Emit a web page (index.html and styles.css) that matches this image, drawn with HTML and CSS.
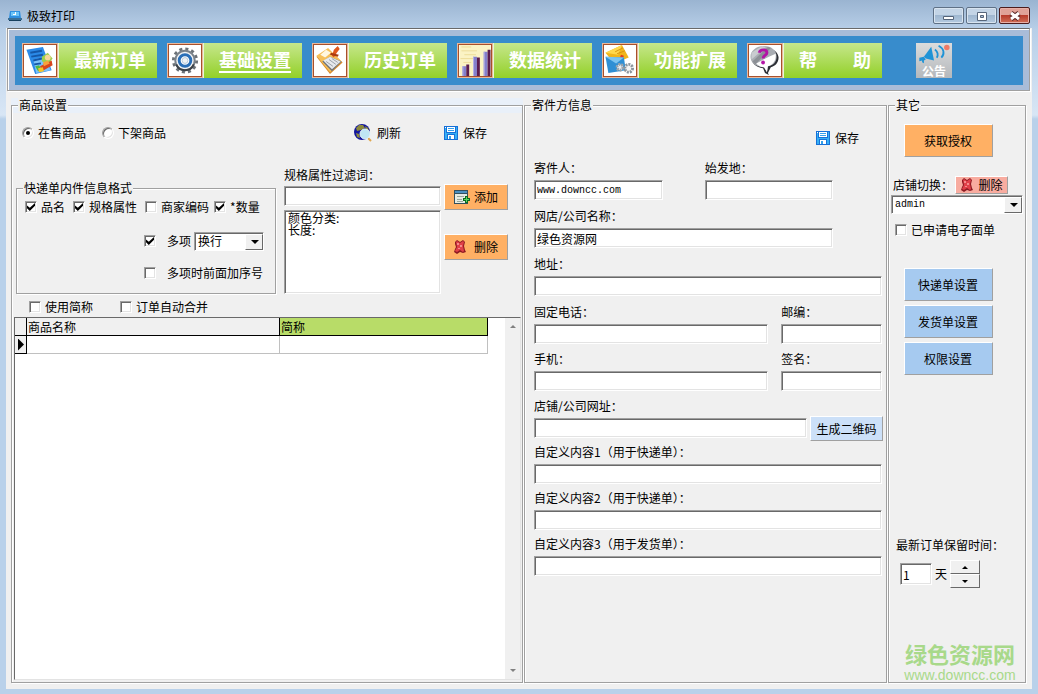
FILE: index.html
```html
<!DOCTYPE html>
<html lang="zh-CN">
<head>
    <meta charset="UTF-8">
    <meta name="viewport" content="width=device-width, initial-scale=1.0">
    <title>极致打印</title>
    <link rel="stylesheet" href="styles.css">
</head>
<body>
    <!-- shared icons -->
    <svg class="sprite" aria-hidden="true">
        <symbol id="icon-save" viewBox="0 0 14 14">
            <path fill="#1670d8" d="M0 0h14v14H0z"/>
            <path fill="#35b0f4" d="M1 1h12v12H1z"/>
            <path fill="#1670d8" d="M2 0h10v7H2zM3 8h8v6H3z"/>
            <path fill="#fff" d="M3 1h8v5H3zM4 9h6v4H4zM1 1h1v1H1z"/>
            <path fill="#35a0ec" d="M4 2h6v1H4zM4 4h6v1H4zM5 10h2v3H5z"/>
        </symbol>
        <symbol id="icon-delete" viewBox="0 0 12 14">
            <path fill="#8e1a22" d="M1 2 3 0l3 2 3-2 2 2-1 4 1 4 1 2-3 1-3-1-3 2-3-2 1-3 1-2-1-3z"/>
            <path fill="#e04048" d="m2 2 1-1 3 2 3-2 1 1-1 4 1 5-1 1-3-2-3 2-2-1 2-4z"/>
            <path fill="#f58a8a" d="M3 3h2v2H3zM6 5h2v2H6zM4 8h2v1H4z"/>
        </symbol>
    </svg>

    <div class="window">
        <header class="titlebar">
            <svg class="app-icon" viewBox="0 0 16 12">
                <path fill="#2f8fe0" d="M3 1h10l1 7H2z"/>
                <path fill="#6cc4f8" d="M4 2h8v4H4z"/>
                <path fill="#fff" d="M8 2h1v3H6V4h2z"/>
                <path fill="#3a6f96" d="M1 8h14v2H1z"/>
                <path fill="#16405f" d="M2 10h12v1H2z"/>
            </svg>
            <h1>极致打印</h1>
            <div class="window-buttons">
                <button type="button" aria-label="最小化"><svg viewBox="0 0 14 12"><path fill="#fff" stroke="#56657a" d="M1.500 6.500h10v3h-10z"/></svg></button>
                <button type="button" aria-label="最大化"><svg viewBox="0 0 14 12"><path fill="#fff" stroke="#56657a" d="M2.500 2.500h9v8h-9z"/><path fill="#a7bdd6" stroke="#56657a" d="M5.500 5.500h3v2h-3z"/></svg></button>
                <button type="button" class="close" aria-label="关闭"><svg viewBox="0 0 14 12"><path stroke="#5a2a2a" stroke-width="5" d="m3 3 8 6M11 3 3 9"/><path stroke="#fff" stroke-width="3" d="m3 3 8 6M11 3 3 9"/></svg></button>
            </div>
        </header>

        <div class="client">
            <nav class="toolbar">
                <div class="toolbar-inner">
                    <button type="button" class="nav-btn">
                        <span class="nav-icon">
                            <svg viewBox="0 0 32 32">
                                <path fill="#2b8ae8" d="m2 5 17-3 9 24-17 4z"/>
                                <path fill="#7cc2fa" d="m9 15 12-3 6 14-15 3z"/>
                                <path stroke="#1457a8" stroke-width="2" d="m6 8 12-2M7 12l12-2M9 16l9-2M10 20l7-1"/>
                                <path fill="#9ccf4c" d="m18 12 6-4 5 6-4 5-7-2z"/>
                                <circle cx="24" cy="13" r="3" fill="#f7d79a"/>
                                <path fill="#d8451c" d="m16 22 12-6 1 5-11 6z"/>
                                <path fill="#f8a03c" d="m19 18 5-2 2 3-6 3z"/>
                                <path fill="#50b848" d="m11 22 4-1 3 5-4 1z"/>
                                <path fill="#f5c428" d="m14 24 5-1 1 4-5 1z"/>
                            </svg>
                        </span>
                        <span class="nav-label"><span>最新订单</span></span>
                    </button>
                    <button type="button" class="nav-btn active">
                        <span class="nav-icon">
                            <svg viewBox="0 0 32 32">
                                <circle cx="16" cy="16" r="12" stroke="#6c7278" stroke-width="3" stroke-dasharray="3.140 3.140"/>
                                <circle cx="16" cy="16" r="10" fill="#f0f2f4" stroke="#7a828a" stroke-width="2"/>
                                <path stroke="#3c4248" stroke-width="2" d="M7 20c3 8 15 8 18 0"/>
                                <circle cx="16" cy="16" r="6" fill="#fff" stroke="#2a6fb8" stroke-width="3"/>
                                <circle cx="16" cy="16" r="3" fill="#eef2f5" stroke="#b8c8d8"/>
                            </svg>
                        </span>
                        <span class="nav-label"><span>基础设置</span></span>
                    </button>
                    <button type="button" class="nav-btn">
                        <span class="nav-icon">
                            <svg viewBox="0 0 32 32">
                                <path fill="#d98c2c" d="m2 12 12-8 15 14-13 12z"/>
                                <path fill="#f6bf58" d="m2 11 12-8 14 14-12 11z"/>
                                <path fill="#fff7e0" d="m6 10 6-5 5 3-6 5z"/>
                                <path fill="#70747a" d="m8 17 8-5 12 5-10 10z"/>
                                <path fill="#e6e9ed" d="m9 16 7-4 11 5-9 8z"/>
                                <path stroke="#9aa0a8" d="m12 17 7 5M15 15l7 5M18 14l6 4"/>
                                <path fill="#e0581c" d="m18 11 2-6 4-4 2 3-3 4-3 5z"/>
                                <path fill="#a83a10" d="m17 8 8 2-1 2-8-2z"/>
                            </svg>
                        </span>
                        <span class="nav-label"><span>历史订单</span></span>
                    </button>
                    <button type="button" class="nav-btn">
                        <span class="nav-icon">
                            <svg viewBox="0 0 32 32">
                                <path fill="#fbf3c4" d="M0 0h32v32H0z"/>
                                <path stroke="#ecdc98" d="M2 6h16M5 10h12M1 14h14M4 18h8M2 2h10"/>
                                <path fill="#8480cc" d="M3 22h4v10H3zM14 12h4v20h-4zM25 7h4v25h-4z"/>
                                <path fill="#5c1c4e" d="M7 20h3v12H7zM18 13h3v19h-3zM29 5h3v27h-3z"/>
                                <path fill="#b7b2e4" d="M3 22h1v10H3zM14 12h1v20h-1zM25 7h1v25h-1z"/>
                            </svg>
                        </span>
                        <span class="nav-label"><span>数据统计</span></span>
                    </button>
                    <button type="button" class="nav-btn">
                        <span class="nav-icon">
                            <svg viewBox="0 0 32 32">
                                <path fill="#f1b51c" d="m1 8 17-8 7 13-15 6z"/>
                                <path fill="#ffd84c" d="m1 8 17-8-4 10z"/>
                                <path stroke="#d89410" d="m11 7 8-4M13 9l8-3"/>
                                <path fill="#e03c20" d="m17 10 3 1-1 3-3-1z"/>
                                <path fill="#2f8fd4" d="m1 12 19 1 2 13-18 3z"/>
                                <path fill="#7cc4f0" d="m1 12 11 7 8-6z"/>
                                <circle cx="16" cy="23" r="3" fill="#e9edf0" stroke="#9ba4ac" stroke-width="3" stroke-dasharray="2 1"/>
                                <circle cx="25" cy="24" r="4" fill="#f4f4f4" stroke="#8c959d" stroke-width="3" stroke-dasharray="2 1"/>
                            </svg>
                        </span>
                        <span class="nav-label"><span>功能扩展</span></span>
                    </button>
                    <button type="button" class="nav-btn">
                        <span class="nav-icon">
                            <svg viewBox="0 0 32 32">
                                <path fill="#2c2f35" d="M16 3c9 0 14 5 14 10 0 6-4 9-8 10l-3 6 1 2-4-2-2-5C7 23 2 19 2 13 2 7 8 3 16 3z"/>
                                <path fill="#a9adb3" d="M15 1c8 0 13 5 13 11S24 21 19 22l-1 6-3-5C6 22 1 18 1 12S7 1 15 1z"/>
                                <path fill="#c9ccd0" d="m2 8 11-7 4 1L2 15z"/>
                                <path fill="#8c9096" d="m3 17 16-15 3 1L6 20z"/>
                                <path fill="#fff" d="M27 9c1 7-3 12-8 13l-1 6-3-5c-3 0-6-2-8-4l13-7z"/>
                                <path stroke="#b314a6" stroke-width="3" d="M10 8c1-4 8-4 8 0 0 3-4 2-4 6"/>
                                <circle cx="14" cy="18" r="2" fill="#b314a6"/>
                            </svg>
                        </span>
                        <span class="nav-label"><span>帮　　助</span></span>
                    </button>
                    <button type="button" class="notice-btn">
                        <svg viewBox="0 0 36 24">
                            <path fill="#1f93d6" d="m7 15 8-11 3 15-9-2z"/>
                            <path fill="#1f93d6" d="m2 16 5-1 2 3-2 1v3l-2-1v-2l-3 1z"/>
                            <path stroke="#1f93d6" stroke-width="2" d="M19 7c3 2 4 6 2 9M23 3c6 3 7 9 3 13"/>
                            <circle cx="32" cy="5" r="3" fill="#ee7a66"/>
                        </svg>
                        <span>公告</span>
                    </button>
                </div>
            </nav>

            <main class="panels">
                <div class="goods-wrap">
                    <fieldset class="group goods">
                        <legend>商品设置</legend>
                        <div class="goods-body">
                            <div class="goods-top">
                                <label class="choice"><input type="radio" name="goods" checked>在售商品</label>
                                <label class="choice"><input type="radio" name="goods">下架商品</label>
                                <button type="button" class="flat-btn refresh">
                                    <svg viewBox="0 0 18 18">
                                        <circle cx="8" cy="8" r="8" fill="#14189c"/>
                                        <path fill="#8c8a3c" d="M5 1h4l2 3-4 2-4 1-1-3zM11 2l3 2 1 3-3-1zM2 9l3 1 1 4-3-1z"/>
                                        <path stroke="#e0a850" stroke-width="2" d="m14 14 3 3"/>
                                        <circle cx="11" cy="10" r="5" fill="#bfe6f4" stroke="#e4f4fa"/>
                                    </svg>刷新
                                </button>
                                <button type="button" class="flat-btn"><svg class="icon-save"><use href="#icon-save"/></svg>保存</button>
                            </div>

                            <div class="goods-mid">
                                <fieldset class="group format">
                                    <legend>快递单内件信息格式</legend>
                                    <div class="format-row">
                                        <label class="choice"><input type="checkbox" checked>品名</label>
                                        <label class="choice"><input type="checkbox" checked>规格属性</label>
                                        <label class="choice"><input type="checkbox">商家编码</label>
                                        <label class="choice"><input type="checkbox" checked>*数量</label>
                                    </div>
                                    <div class="format-row indent">
                                        <label class="choice wide"><input type="checkbox" checked>多项</label>
                                        <span class="combo small">
                                            <select aria-label="多项分隔"><option>换行</option></select>
                                        </span>
                                    </div>
                                    <div class="format-row indent">
                                        <label class="choice wide"><input type="checkbox">多项时前面加序号</label>
                                    </div>
                                </fieldset>
                                <div class="filter">
                                    <label for="filterWord">规格属性过滤词：</label>
                                    <input type="text" class="box" id="filterWord">
                                    <textarea class="box" aria-label="过滤词列表">颜色分类:
长度:</textarea>
                                </div>
                                <div class="filter-buttons">
                                    <button type="button" class="btn orange">
                                        <svg viewBox="0 0 16 14">
                                            <path fill="#33505f" d="M0 0h14v14H0z"/>
                                            <path fill="#e6ece4" d="M1 4h12v9H1z"/>
                                            <path fill="#4c90c0" d="M1 1h12v2H1z"/>
                                            <path fill="#9aa79a" d="M3 6h7v1H3zM3 9h5v1H3zM3 11h6v1H3z"/>
                                            <path fill="#0f6a20" d="M11 6h3v2h2v3h-2v2h-3v-2H9V8h2z"/>
                                            <path fill="#5ad860" d="M12 7h1v2h2v1h-2v2h-1v-2h-2V9h2z"/>
                                        </svg>添加
                                    </button>
                                    <button type="button" class="btn orange"><svg class="icon-delete"><use href="#icon-delete"/></svg>删除</button>
                                </div>
                            </div>

                            <div class="goods-options">
                                <label class="choice"><input type="checkbox">使用简称</label>
                                <label class="choice"><input type="checkbox">订单自动合并</label>
                            </div>

                            <div class="table-box">
                                <div class="table-area">
                                    <table>
                                        <colgroup>
                                            <col class="col-mark">
                                            <col class="col-name">
                                            <col>
                                        </colgroup>
                                        <thead>
                                            <tr><th></th><th>商品名称</th><th class="selected">简称</th></tr>
                                        </thead>
                                        <tbody>
                                            <tr><td class="mark"><i class="marker"></i></td><td></td><td></td></tr>
                                        </tbody>
                                    </table>
                                </div>
                                <div class="scrollbar">
                                    <button type="button" aria-label="向上滚动"><i class="arrow up"></i></button>
                                    <button type="button" aria-label="向下滚动"><i class="arrow down"></i></button>
                                </div>
                            </div>
                        </div>
                    </fieldset>
                </div>

                <fieldset class="group sender">
                    <legend>寄件方信息</legend>
                    <div class="sender-top">
                        <button type="button" class="flat-btn"><svg class="icon-save"><use href="#icon-save"/></svg>保存</button>
                    </div>
                    <div class="row narrow two">
                        <div class="field"><label for="sender">寄件人：</label><input type="text" class="box latin" id="sender" value="www.downcc.com"></div>
                        <div class="field"><label for="origin">始发地：</label><input type="text" class="box" id="origin"></div>
                    </div>
                    <div class="row narrow">
                        <div class="field"><label for="company">网店/公司名称：</label><input type="text" class="box" id="company" value="绿色资源网" autofocus></div>
                    </div>
                    <div class="row">
                        <div class="field"><label for="address">地址：</label><input type="text" class="box" id="address"></div>
                    </div>
                    <div class="row phone">
                        <div class="field"><label for="tel">固定电话：</label><input type="text" class="box" id="tel"></div>
                        <div class="field"><label for="zip">邮编：</label><input type="text" class="box" id="zip"></div>
                    </div>
                    <div class="row phone">
                        <div class="field"><label for="mobile">手机：</label><input type="text" class="box" id="mobile"></div>
                        <div class="field"><label for="sign">签名：</label><input type="text" class="box" id="sign"></div>
                    </div>
                    <div class="row custom site">
                        <div class="field"><label for="url">店铺/公司网址：</label><input type="text" class="box" id="url"></div>
                        <button type="button" class="btn pale">生成二维码</button>
                    </div>
                    <div class="row custom">
                        <div class="field"><label for="custom1">自定义内容1（用于快递单）：</label><input type="text" class="box" id="custom1"></div>
                    </div>
                    <div class="row custom">
                        <div class="field"><label for="custom2">自定义内容2（用于快递单）：</label><input type="text" class="box" id="custom2"></div>
                    </div>
                    <div class="row custom">
                        <div class="field"><label for="custom3">自定义内容3（用于发货单）：</label><input type="text" class="box" id="custom3"></div>
                    </div>
                </fieldset>

                <fieldset class="group other">
                    <legend>其它</legend>
                    <div class="other-body">
                        <button type="button" class="btn orange big">获取授权</button>
                        <div class="shop-row">
                            <label for="shop">店铺切换：</label>
                            <button type="button" class="btn red"><svg class="icon-delete"><use href="#icon-delete"/></svg>删除</button>
                        </div>
                        <span class="combo latin">
                            <select id="shop"><option>admin</option></select>
                        </span>
                        <label class="choice applied"><input type="checkbox">已申请电子面单</label>
                        <div class="settings">
                            <button type="button" class="btn blue big">快递单设置</button>
                            <button type="button" class="btn blue big">发货单设置</button>
                            <button type="button" class="btn blue big">权限设置</button>
                        </div>
                        <div class="keep">
                            <label for="keepDays">最新订单保留时间：</label>
                            <div class="keep-row">
                                <input type="text" class="box" id="keepDays" value="1">
                                <span>天</span>
                                <div class="spinner">
                                    <button type="button" aria-label="增加"><i class="arrow up"></i></button>
                                    <button type="button" aria-label="减少"><i class="arrow down"></i></button>
                                </div>
                            </div>
                        </div>
                        <div class="brand">
                            <strong>绿色资源网</strong>
                            <span>www.downcc.com</span>
                        </div>
                    </div>
                </fieldset>
            </main>
        </div>
    </div>
</body>
</html>
```

FILE: styles.css
```css
* {
    box-sizing: border-box;
}
body {
    margin: 0;
    font-family: "Noto Sans CJK SC", sans-serif;
    font-size: 12px;
    line-height: 16px;
    color: #000;
}
button, input, select, textarea {
    font: inherit;
    color: inherit;
    margin: 0;
    padding: 0;
    border: 0;
    border-radius: 0;
}
svg {
    display: block;
    fill: none;
    flex: none;
}
.sprite {
    position: absolute;
    width: 0;
    height: 0;
}

/* window frame */
.window {
    display: flex;
    flex-direction: column;
    min-height: 100vh;
    padding: 0 6px 5px;
    background: linear-gradient(#9ab4d1 0, #b8cfe8 30px, #d8e6f5 115px, #b9d1ea 119px);
}
.titlebar {
    display: flex;
    align-items: center;
    height: 28px;
    padding: 3px 2px 0 1px;
}
.titlebar h1 {
    margin: 0 auto 0 4px;
    font-size: 12px;
    font-weight: normal;
}
.app-icon {
    width: 16px;
    height: 12px;
}
.window-buttons {
    display: flex;
    gap: 2px;
}
.window-buttons button {
    display: flex;
    align-items: center;
    justify-content: center;
    width: 31px;
    height: 17px;
    border: 1px solid #5f7186;
    border-radius: 2px;
    box-shadow: inset 0 0 0 1px #d8e4f0;
    background: linear-gradient(#c3d4e6 50%, #9fb7d0 50%, #b4cae0);
}
.window-buttons .close {
    border-color: #4c1c1c;
    box-shadow: inset 0 0 0 1px #e8b0a8;
    background: linear-gradient(#e0a298 50%, #b83c2c 50%, #d07058);
}
.window-buttons svg {
    width: 14px;
    height: 12px;
}
.client {
    flex: 1;
    display: flex;
    flex-direction: column;
    background: #f0f0f0;
}

/* toolbar */
.toolbar {
    margin: 0 2px 0 1px;
    padding: 7px 6px 5px 7px;
    border: 1px solid #a0a0a0;
    border-top-color: #696969;
    box-shadow: inset 1px 1px #fff, 1px 1px #fff;
    background: #a9bcd8;
}
.toolbar-inner {
    display: flex;
    align-items: center;
    gap: 10px;
    height: 49px;
    padding: 0 7px;
    background: #388ccc;
}
.nav-btn {
    display: flex;
    gap: 1px;
    width: 135px;
    height: 35px;
    background: #e8f4d8;
    cursor: pointer;
}
.nav-icon {
    width: 36px;
    height: 35px;
    padding: 1px;
    border: 1px solid #e8b89c;
    background: #a8502c;
}
.nav-icon svg {
    width: 32px;
    height: 31px;
    background: #fff;
}
.nav-label {
    flex: 1;
    height: 35px;
    padding: 4px 0 0 4px;
    background: linear-gradient(#c6e78c, #93d028);
    color: #fff;
    font-size: 18px;
    font-weight: bold;
    line-height: 24px;
}
.nav-label span {
    display: inline-block;
    border-bottom: 2px solid transparent;
}
.active .nav-label span {
    border-color: #fff;
}
.notice-btn {
    display: flex;
    flex-direction: column;
    width: 36px;
    height: 35px;
    margin-left: 24px;
    background: linear-gradient(#dcdcdc, #b4b8bc);
    color: #fff;
    font-weight: bold;
    line-height: 12px;
    cursor: pointer;
}
.notice-btn svg {
    width: 36px;
    height: 22px;
}

/* controls */
.box {
    height: 20px;
    padding: 0 2px;
    border: 1px solid;
    border-color: #a0a0a0 #fff #fff #a0a0a0;
    box-shadow: inset 1px 1px #696969, inset -1px -1px #e3e3e3;
    background: #fff;
    outline: none;
}
.latin {
    font-family: "Liberation Mono", monospace;
    font-size: 10px;
}
.choice {
    display: flex;
    align-items: center;
    gap: 4px;
    white-space: nowrap;
}
.choice input {
    appearance: none;
    flex: none;
    display: grid;
    place-items: center;
    width: 12px;
    height: 12px;
    border: 1px solid;
    border-color: #a0a0a0 #fff #fff #a0a0a0;
    box-shadow: inset 1px 1px #696969, inset -1px -1px #e3e3e3;
    background: #fff;
}
.choice input[type="radio"] {
    border-radius: 50%;
}
.choice input[type="checkbox"]:checked::after {
    content: "";
    width: 8px;
    height: 8px;
    background: #000;
    clip-path: polygon(0 30%, 35% 60%, 100% 0, 100% 35%, 35% 100%, 0 65%);
}
.choice input[type="radio"]:checked::after {
    content: "";
    width: 4px;
    height: 4px;
    border-radius: 50%;
    background: #000;
}
.choice.wide {
    gap: 11px;
}
.btn {
    display: flex;
    align-items: center;
    justify-content: center;
    gap: 4px;
    border: 1px solid;
    border-color: #fff #a0a0a0 #a0a0a0 #fff;
    white-space: nowrap;
    cursor: pointer;
}
.orange {
    background: #ffb064;
}
.blue {
    background: #a6caf0;
}
.pale {
    background: #cce0f8;
}
.red {
    background: #f8aca0;
}
.big {
    width: 89px;
    height: 33px;
}
.flat-btn {
    display: flex;
    align-items: center;
    gap: 5px;
    background: none;
    cursor: pointer;
}
.icon-save {
    width: 14px;
    height: 14px;
}
.icon-delete {
    width: 12px;
    height: 14px;
    margin-right: 4px;
}
.combo {
    position: relative;
    display: block;
    height: 19px;
    border: 1px solid;
    border-color: #a0a0a0 #fff #fff #a0a0a0;
    box-shadow: inset 1px 1px #696969;
    background: #fff;
}
.combo select {
    appearance: none;
    display: block;
    width: 100%;
    height: 17px;
    padding-left: 3px;
    background: none;
    outline: none;
}
.combo::before {
    content: "";
    position: absolute;
    top: 1px;
    right: 0;
    bottom: 0;
    width: 16px;
    border: 1px solid;
    border-color: #fff #696969 #696969 #fff;
    background: #f0f0f0;
    pointer-events: none;
}
.combo::after {
    content: "";
    position: absolute;
    top: 7px;
    right: 4px;
    border: 4px solid transparent;
    border-top-color: #000;
    border-bottom: 0;
    pointer-events: none;
}
.combo.small {
    width: 70px;
}
.arrow {
    border: 3px solid transparent;
}
.arrow.up {
    border-top: 0;
    border-bottom-color: currentColor;
}
.arrow.down {
    border-bottom: 0;
    border-top-color: currentColor;
}

/* group boxes */
.panels {
    flex: 1;
    display: grid;
    grid-template-columns: 512fr 363fr 138fr;
    gap: 1px;
    padding: 7px 6px 6px 5px;
}
.group {
    min-width: 0;
    margin: 0;
    padding: 0;
    border: 1px solid #a0a0a0;
    box-shadow: inset 1px 1px #fff, 1px 1px #fff;
}
.group legend {
    height: 14px;
    margin-left: 6px;
    padding: 0 1px;
    line-height: 14px;
    background: #f0f0f0;
}

/* goods */
.goods-wrap {
    display: flex;
    min-width: 0;
    background: linear-gradient(#e9f0f9 15px, transparent 15px);
}
.goods {
    flex: 1;
}
.goods-body {
    display: flex;
    flex-direction: column;
    height: 100%;
    padding: 0 1px 2px 2px;
}
.goods-top {
    display: flex;
    align-items: center;
    gap: 16px;
    height: 42px;
    padding: 0 34px 0 8px;
}
.goods-top .refresh {
    margin: 0 27px 0 auto;
}
.refresh svg {
    width: 18px;
    height: 18px;
}
.goods-mid {
    display: grid;
    grid-template-columns: 261fr 156fr 59px;
    gap: 0 8px;
    height: 127px;
    margin: 13px 13px 0 2px;
}
.format {
    align-self: end;
    height: 113px;
}
.format-row {
    display: flex;
    align-items: center;
    gap: 8px;
    height: 24px;
    padding-left: 8px;
}
.format-row .choice:last-child {
    margin-left: -3px;
}
.format-row.indent {
    gap: 3px;
    height: 32px;
    padding-left: 127px;
}
.format-row + .indent {
    margin-top: 6px;
}
.format-row.indent + .indent {
    margin-top: 0;
}
.format-row .choice.wide {
    margin-left: 0;
}
.filter {
    display: flex;
    flex-direction: column;
    gap: 4px;
}
.filter label {
    line-height: 15px;
}
.filter textarea {
    flex: 1;
    resize: none;
    padding: 1px 3px;
    line-height: 12px;
}
.filter-buttons {
    display: flex;
    flex-direction: column;
    gap: 24px;
    padding-top: 17px;
    margin-left: -5px;
}
.filter-buttons .btn {
    height: 26px;
}
.filter-buttons svg:not(.icon-delete) {
    width: 16px;
    height: 14px;
}
.goods-options {
    display: flex;
    gap: 27px;
    height: 23px;
    padding: 2px 0 0 15px;
}
.table-box {
    flex: 1;
    display: flex;
    border: 1px solid;
    border-color: #696969 #e3e3e3 #e3e3e3 #696969;
    background: #fff;
}
.table-area {
    flex: 1;
    padding-right: 17px;
}
table {
    width: 100%;
    table-layout: fixed;
    border-collapse: separate;
    border-spacing: 0;
}
.col-mark {
    width: 12px;
}
.col-name {
    width: 253px;
}
th, td {
    height: 18px;
    padding: 0 1px;
    line-height: 16px;
    text-align: left;
    font-weight: normal;
}
th {
    border: solid #000;
    border-width: 0 1px 1px 0;
    background: #f0f0f0;
}
th.selected {
    background: #b8dc68;
}
td {
    border: solid #c0c0c0;
    border-width: 0 1px 1px 0;
}
td.mark {
    border-color: #000;
    background: #f0f0f0;
}
.marker {
    display: block;
    width: 6px;
    height: 12px;
    margin-left: 2px;
    background: #000;
    clip-path: polygon(0 0, 100% 50%, 0 100%);
}
.scrollbar {
    display: flex;
    flex-direction: column;
    justify-content: space-between;
    width: 15px;
    background: #f0f0f0;
}
.scrollbar button {
    display: grid;
    place-items: center;
    height: 17px;
    background: none;
    color: #808080;
}

/* sender */
.sender {
    padding: 0 4px 0 9px;
}
.sender legend {
    margin-left: -3px;
}
.sender-top {
    display: flex;
    justify-content: flex-end;
    padding: 18px 23px 0 0;
    margin-bottom: 14px;
}
.row {
    display: grid;
    margin-bottom: 8px;
}
.row.custom {
    margin-bottom: 6px;
}
.row.narrow {
    width: 86%;
}
.row.two {
    grid-template-columns: 1fr 1fr;
    gap: 42px;
}
.row.phone {
    grid-template-columns: 235fr 101fr;
    gap: 13px;
    margin-bottom: 7px;
}
.row.site {
    grid-template-columns: 1fr 72px;
    align-items: end;
    gap: 3px;
}
.row.site .btn {
    height: 25px;
    margin: 0 -1px -3px 0;
}
.field {
    display: flex;
    flex-direction: column;
    gap: 4px;
    min-width: 0;
}
.field input {
    width: 100%;
}

/* other */
.other-body {
    display: flex;
    flex-direction: column;
    height: 100%;
    padding: 12px 2px 0;
}
.other-body .big {
    align-self: center;
    margin-right: 18px;
}
.shop-row {
    display: flex;
    align-items: center;
    gap: 2px;
    margin: 19px 0 1px 2px;
}
.shop-row .btn {
    width: 53px;
    height: 18px;
    gap: 2px;
}
.applied {
    margin: 8px 0 0 4px;
}
.settings {
    display: flex;
    flex-direction: column;
    gap: 4px;
    margin-top: 30px;
}
.keep {
    margin: 162px 0 0 5px;
}
.keep-row {
    display: flex;
    align-items: center;
    gap: 3px;
    margin: 7px 0 0 4px;
}
.keep-row .box {
    width: 32px;
    height: 22px;
}
.spinner {
    width: 30px;
}
.spinner button {
    display: grid;
    place-items: center;
    width: 30px;
    height: 14px;
    border: 1px solid;
    border-color: #fff #696969 #696969 #fff;
    background: #f0f0f0;
}
.brand {
    display: flex;
    flex-direction: column;
    align-items: center;
    margin: auto 0 0;
    padding-left: 6px;
    color: #a8d98a;
    font-family: "Liberation Sans", "Noto Sans CJK SC", sans-serif;
    font-size: 14px;
    line-height: 14px;
}
.brand strong {
    font-size: 22px;
    line-height: 24px;
}
```
